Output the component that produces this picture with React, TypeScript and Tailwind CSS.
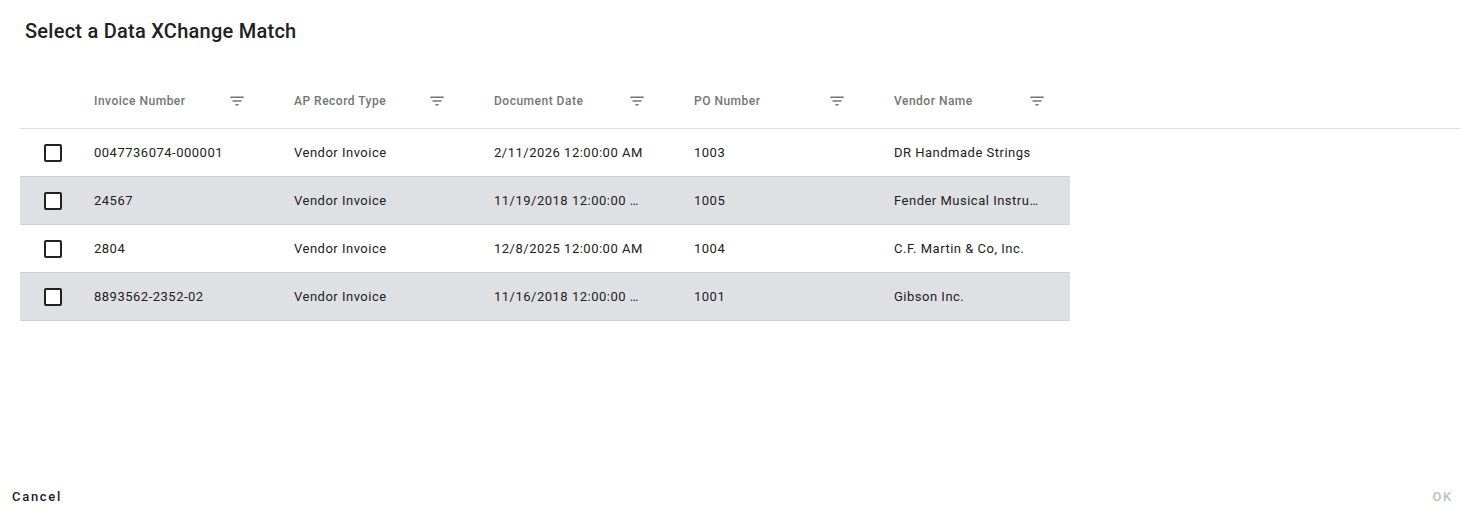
import { useState } from 'react';

interface MatchRow {
  invoice: string;
  recordType: string;
  docDate: string;
  po: string;
  vendor: string;
}

const rows: MatchRow[] = [
  { invoice: '0047736074-000001', recordType: 'Vendor Invoice', docDate: '2/11/2026 12:00:00 AM', po: '1003', vendor: 'DR Handmade Strings' },
  { invoice: '24567', recordType: 'Vendor Invoice', docDate: '11/19/2018 12:00:00 AM', po: '1005', vendor: 'Fender Musical Instruments Corp.' },
  { invoice: '2804', recordType: 'Vendor Invoice', docDate: '12/8/2025 12:00:00 AM', po: '1004', vendor: 'C.F. Martin & Co, Inc.' },
  { invoice: '8893562-2352-02', recordType: 'Vendor Invoice', docDate: '11/16/2018 12:00:00 AM', po: '1001', vendor: 'Gibson Inc.' },
];

const columns = ['Invoice Number', 'AP Record Type', 'Document Date', 'PO Number', 'Vendor Name'];

function FilterIcon() {
  return (
    <svg width="18" height="18" viewBox="0 0 24 24" fill="#757575">
      <path d="M10 18h4v-2h-4v2zM3 6v2h18V6H3zm3 7h12v-2H6v2z" />
    </svg>
  );
}

function Checkbox({ checked, onToggle }: { checked: boolean; onToggle: () => void }) {
  return (
    <button
      onClick={onToggle}
      className="w-[18px] h-[18px] rounded-[2px] border-2 border-[#222] flex items-center justify-center bg-white"
    >
      {checked && <span className="w-[10px] h-[10px] bg-[#222]" />}
    </button>
  );
}

export default function App() {
  const [selected, setSelected] = useState<number | null>(null);

  return (
    <div className="h-[520px] w-full flex flex-col bg-white" style={{ fontFamily: 'Roboto, "Liberation Sans", sans-serif' }}>
      <div className="h-[62px] flex items-center px-[25px]">
        <h1 className="text-[20px] font-medium text-[#212121] tracking-[0.25px]">Select a Data XChange Match</h1>
      </div>

      <div className="mt-[11px] pl-[20px] pr-[21px]">
        <div className="flex h-[56px] items-center border-b border-[#e0e0e0]">
          <div className="w-[50px]" />
          {columns.map((c) => (
            <div key={c} className="w-[200px] pl-[24px] pr-[24px] flex items-center justify-between">
              <span className="text-[12px] font-medium text-[#757575] tracking-[0.5px]">{c}</span>
              <FilterIcon />
            </div>
          ))}
        </div>

        <div className="w-[1050px]">
          {rows.map((r, i) => (
            <div
              key={r.invoice}
              className={`flex h-[48px] items-center border-b border-[#cfd0d4] text-[13px] text-[#212121] tracking-[0.5px] ${
                i % 2 === 1 ? 'bg-[#dfe0e4]' : 'bg-white'
              }`}
            >
              <div className="w-[50px] flex pl-[24px]">
                <Checkbox checked={selected === i} onToggle={() => setSelected(selected === i ? null : i)} />
              </div>
              {[r.invoice, r.recordType, r.docDate, r.po, r.vendor].map((v, j) => (
                <div key={j} className="w-[200px] pl-[24px] pr-[24px] truncate">
                  {v}
                </div>
              ))}
            </div>
          ))}
        </div>
      </div>

      <div className="flex-1" />

      <div className="h-[46px] flex items-center justify-between pl-[12px] pr-[28px]">
        <button className="text-[13px] font-medium tracking-[1.7px] text-[#212121]">Cancel</button>
        <button className="text-[13px] font-medium tracking-[1.7px] text-[#bdbdbd]" disabled>
          OK
        </button>
      </div>
    </div>
  );
}
